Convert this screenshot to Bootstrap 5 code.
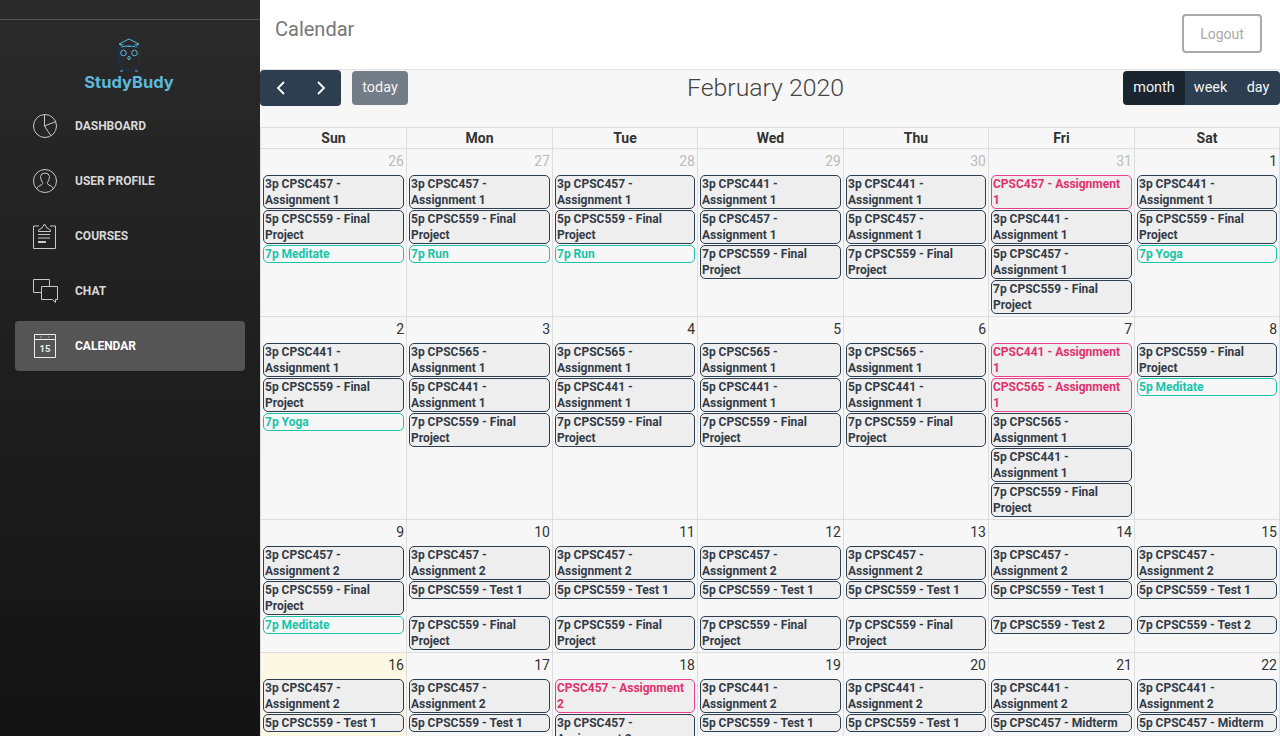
<!DOCTYPE html>
<html lang="en">
<head>
<meta charset="utf-8">
<title>Calendar</title>
<link href="https://cdn.jsdelivr.net/npm/bootstrap@5.3.0/dist/css/bootstrap.min.css" rel="stylesheet">
<style>
html,body{height:736px;overflow:hidden}
body{font-family:Roboto,"Liberation Sans",sans-serif;background:#f7f7f7;color:#333}
.side{width:260px;height:736px;background:linear-gradient(180deg,#2a2a2a 0%,#131313 100%);color:#ddd}
.side-top{height:20px;border-bottom:1px solid #555}
.brand{height:63px;margin-top:18px;padding-right:2px;color:#5db7de;font-family:Inter,"Liberation Sans",sans-serif;font-weight:700;font-size:16.5px;line-height:20px}
.brand svg{height:34px;width:24px}
.nav-i{height:50px;margin:0 15px 5px;padding-left:17px;gap:17px;border-radius:4px;color:#d8d8d8;font-size:12px;font-weight:700;text-transform:uppercase;text-decoration:none}
.nav-i svg{width:26px;height:26px;flex:none}
.nav-i.on{background:#555;color:#fff}
.main-pane{width:1020px}
.topbar{height:70px;background:#fff;border-bottom:1px solid #e2e2e2;padding:14px 18px 0 15px}
.page-ttl{font-size:20px;line-height:30px;color:#777;font-weight:400}
.btn-out{width:80px;height:39px;border:2px solid #aaa;border-radius:4px;color:#aaa;font-size:14px;background:#fff;padding:1px 0 0}
.tools{height:57px;align-items:flex-start}
.bt{background:#2c3e50;color:#f4f4f4;border:0;font-size:14.4px;height:34px;padding:0;line-height:34px}
.navpair{height:36px;width:81px;background:#2c3e50;border-radius:4px;align-items:center;justify-content:center;gap:28px}
.navpair svg{width:12px;height:16px}
.bt-today{margin-left:11px;margin-top:1px;width:56px;border-radius:4px;background:#737d87}
.cal-ttl{font-size:24.8px;line-height:36px;color:#444;font-weight:300;left:427px;width:157px;white-space:nowrap;top:0}
.bt-group{margin-top:1px;width:157px;border-radius:4px;overflow:hidden}
.bt-group .cur{background:#1a252f;width:62px}
.bt-group .wk{width:51px}
.bt-group .dy{width:44px}
.grid{table-layout:fixed;width:1020px;border-collapse:separate;border-spacing:0;font-size:12px}
.grid th{height:21px;width:146px;border-top:1px solid #ddd;border-left:1px solid #ddd;text-align:center;font-size:14px;font-weight:700;color:#333;line-height:20px;padding:0}
.grid th:nth-child(3),.grid th:nth-child(5){width:145px}
.grid td{border-left:1px solid #ddd;padding:0;vertical-align:top}
.grid th:last-child,.grid td:last-child{border-right:1px solid #ddd}
.grid tr.num td{border-top:1px solid #ddd;height:27px;text-align:right;font-size:14px;line-height:24px;padding:0 2px 0 0;color:#333}
.grid tr.num td.off{color:#bbb}
.grid tr.last td{padding-bottom:1px}
.grid td.now{background:#fcf8e3}
.evt{display:block;margin:0 2px 1px;border:1px solid #2c3e50;border-radius:5px;background:#eee;color:#333c47;font-weight:700;font-size:12px;line-height:16px;padding:0 3px 0 1px;text-decoration:none}
.evt-due{border-color:#e83e8c;color:#e0316f}
.evt-hab{border-color:#18c5a9;color:#18c5a9;background:#f7f7f7}
</style>
</head>
<body class="d-flex">
<aside class="side flex-shrink-0">
  <div class="side-top"></div>
  <div class="brand d-flex flex-column align-items-center">
    <svg viewBox="0 0 24 34" fill="none" stroke-width="1">
      <path d="M2 6 12 1l10 5-10 2.500zM4 7v2q8-3 16 0V7" stroke="#5db7de"/>
      <path d="M1.500 9q10-4 21 0v17q-2 4-6 6h-9q-4-2-6-6z" stroke="#17375e"/>
      <circle cx="6.500" cy="15" r="2.800" stroke="#5db7de"/><circle cx="17.500" cy="15" r="2.800" stroke="#5db7de"/>
      <path d="m12 18 1.500 2-1.500 2-1.500-2z" stroke="#5db7de"/>
      <path d="M3 33h3M18 33h3" stroke="#5db7de"/>
    </svg>
    <span>StudyBudy</span>
  </div>
  <nav class="d-flex flex-column">
    <a class="nav-i d-flex align-items-center" href="#"><svg viewBox="0 0 26 26" fill="none" stroke="#c8c8c8"><circle cx="13" cy="13" r="11.500"/><path d="M12.500 1.500V13L24 8.500M12.500 13 19 23"/></svg>Dashboard</a>
    <a class="nav-i d-flex align-items-center" href="#"><svg viewBox="0 0 26 26" fill="none" stroke="#c8c8c8"><circle cx="13" cy="13" r="11.500"/><path d="M4.500 21q1-3 5.500-4.500 1-1 .5-2-2-3-2-6Q9 5 13 5t4.500 3.500q0 3-2 6-.5 1 .5 2 4.500 1.500 5.500 4.500"/></svg>User Profile</a>
    <a class="nav-i d-flex align-items-center" href="#"><svg viewBox="0 0 26 26" fill="none" stroke="#c8c8c8"><path d="M7 3H1.500v22.500h22V3H18"/><path d="M6.500 8.500V7L10 5l2.500-4L15 5l3.500 2v1.500zM6 11.500h12M6 15h12"/><path d="M6 19h8" stroke-width="2"/></svg>Courses</a>
    <a class="nav-i d-flex align-items-center" href="#"><svg viewBox="0 0 26 26" fill="none" stroke="#c8c8c8"><path d="M9 14.500H1.500v-13h16V8"/><path d="M9.500 8.500h16v13h-2v3l-3-3h-11z"/></svg>Chat</a>
    <a class="nav-i on d-flex align-items-center" href="#"><svg viewBox="0 0 26 26" fill="none" stroke="#eee"><path d="M2.500 1.500h21v23h-21zM2.500 6.500h21M8.500 4h1M16.500 4h1"/><text x="13" y="18.500" font-size="9.500" fill="#eee" stroke="none" text-anchor="middle" font-family="Roboto">15</text></svg>Calendar</a>
  </nav>
</aside>
<main class="main-pane">
  <header class="topbar d-flex justify-content-between align-items-start">
    <h1 class="page-ttl m-0">Calendar</h1>
    <button class="btn-out" type="button">Logout</button>
  </header>
  <div class="tools d-flex justify-content-between position-relative">
    <div class="d-flex">
      <div class="navpair d-flex"><svg viewBox="0 0 12 16" fill="none" stroke="#fff" stroke-width="1.800"><path d="M9 2 3 8l6 6"/></svg><svg viewBox="0 0 12 16" fill="none" stroke="#fff" stroke-width="1.800"><path d="m3 2 6 6-6 6"/></svg></div>
      <button class="bt bt-today" type="button">today</button>
    </div>
    <h2 class="cal-ttl position-absolute m-0">February 2020</h2>
    <div class="bt-group d-flex"><button class="bt cur" type="button">month</button><button class="bt wk" type="button">week</button><button class="bt dy" type="button">day</button></div>
  </div>
  <table class="grid">
    <thead><tr><th>Sun</th><th>Mon</th><th>Tue</th><th>Wed</th><th>Thu</th><th>Fri</th><th>Sat</th></tr></thead>
    <tbody>
      <tr class="num"><td class="off">26</td><td class="off">27</td><td class="off">28</td><td class="off">29</td><td class="off">30</td><td class="off">31</td><td>1</td></tr>
      <tr>
        <td><a class="evt">3p CPSC457 - Assignment 1</a></td><td><a class="evt">3p CPSC457 - Assignment 1</a></td><td><a class="evt">3p CPSC457 - Assignment 1</a></td><td><a class="evt">3p CPSC441 - Assignment 1</a></td><td><a class="evt">3p CPSC441 - Assignment 1</a></td><td><a class="evt evt-due">CPSC457 - Assignment 1</a></td><td><a class="evt">3p CPSC441 - Assignment 1</a></td>
      </tr>
      <tr>
        <td><a class="evt">5p CPSC559 - Final Project</a></td><td><a class="evt">5p CPSC559 - Final Project</a></td><td><a class="evt">5p CPSC559 - Final Project</a></td><td><a class="evt">5p CPSC457 - Assignment 1</a></td><td><a class="evt">5p CPSC457 - Assignment 1</a></td><td><a class="evt">3p CPSC441 - Assignment 1</a></td><td><a class="evt">5p CPSC559 - Final Project</a></td>
      </tr>
      <tr>
        <td><a class="evt evt-hab">7p Meditate</a></td><td><a class="evt evt-hab">7p Run</a></td><td><a class="evt evt-hab">7p Run</a></td><td><a class="evt">7p CPSC559 - Final Project</a></td><td><a class="evt">7p CPSC559 - Final Project</a></td><td><a class="evt">5p CPSC457 - Assignment 1</a></td><td><a class="evt evt-hab">7p Yoga</a></td>
      </tr>
      <tr class="last"><td></td><td></td><td></td><td></td><td></td><td><a class="evt">7p CPSC559 - Final Project</a></td><td></td></tr>

      <tr class="num"><td>2</td><td>3</td><td>4</td><td>5</td><td>6</td><td>7</td><td>8</td></tr>
      <tr>
        <td><a class="evt">3p CPSC441 - Assignment 1</a></td><td><a class="evt">3p CPSC565 - Assignment 1</a></td><td><a class="evt">3p CPSC565 - Assignment 1</a></td><td><a class="evt">3p CPSC565 - Assignment 1</a></td><td><a class="evt">3p CPSC565 - Assignment 1</a></td><td><a class="evt evt-due">CPSC441 - Assignment 1</a></td><td><a class="evt">3p CPSC559 - Final Project</a></td>
      </tr>
      <tr>
        <td><a class="evt">5p CPSC559 - Final Project</a></td><td><a class="evt">5p CPSC441 - Assignment 1</a></td><td><a class="evt">5p CPSC441 - Assignment 1</a></td><td><a class="evt">5p CPSC441 - Assignment 1</a></td><td><a class="evt">5p CPSC441 - Assignment 1</a></td><td><a class="evt evt-due">CPSC565 - Assignment 1</a></td><td><a class="evt evt-hab">5p Meditate</a></td>
      </tr>
      <tr>
        <td><a class="evt evt-hab">7p Yoga</a></td><td><a class="evt">7p CPSC559 - Final Project</a></td><td><a class="evt">7p CPSC559 - Final Project</a></td><td><a class="evt">7p CPSC559 - Final Project</a></td><td><a class="evt">7p CPSC559 - Final Project</a></td><td><a class="evt">3p CPSC565 - Assignment 1</a></td><td></td>
      </tr>
      <tr><td></td><td></td><td></td><td></td><td></td><td><a class="evt">5p CPSC441 - Assignment 1</a></td><td></td></tr>
      <tr class="last"><td></td><td></td><td></td><td></td><td></td><td><a class="evt">7p CPSC559 - Final Project</a></td><td></td></tr>

      <tr class="num"><td>9</td><td>10</td><td>11</td><td>12</td><td>13</td><td>14</td><td>15</td></tr>
      <tr>
        <td><a class="evt">3p CPSC457 - Assignment 2</a></td><td><a class="evt">3p CPSC457 - Assignment 2</a></td><td><a class="evt">3p CPSC457 - Assignment 2</a></td><td><a class="evt">3p CPSC457 - Assignment 2</a></td><td><a class="evt">3p CPSC457 - Assignment 2</a></td><td><a class="evt">3p CPSC457 - Assignment 2</a></td><td><a class="evt">3p CPSC457 - Assignment 2</a></td>
      </tr>
      <tr>
        <td><a class="evt">5p CPSC559 - Final Project</a></td><td><a class="evt">5p CPSC559 - Test 1</a></td><td><a class="evt">5p CPSC559 - Test 1</a></td><td><a class="evt">5p CPSC559 - Test 1</a></td><td><a class="evt">5p CPSC559 - Test 1</a></td><td><a class="evt">5p CPSC559 - Test 1</a></td><td><a class="evt">5p CPSC559 - Test 1</a></td>
      </tr>
      <tr class="last">
        <td><a class="evt evt-hab">7p Meditate</a></td><td><a class="evt">7p CPSC559 - Final Project</a></td><td><a class="evt">7p CPSC559 - Final Project</a></td><td><a class="evt">7p CPSC559 - Final Project</a></td><td><a class="evt">7p CPSC559 - Final Project</a></td><td><a class="evt">7p CPSC559 - Test 2</a></td><td><a class="evt">7p CPSC559 - Test 2</a></td>
      </tr>

      <tr class="num"><td class="now">16</td><td>17</td><td>18</td><td>19</td><td>20</td><td>21</td><td>22</td></tr>
      <tr>
        <td class="now"><a class="evt">3p CPSC457 - Assignment 2</a></td><td><a class="evt">3p CPSC457 - Assignment 2</a></td><td><a class="evt evt-due">CPSC457 - Assignment 2</a></td><td><a class="evt">3p CPSC441 - Assignment 2</a></td><td><a class="evt">3p CPSC441 - Assignment 2</a></td><td><a class="evt">3p CPSC441 - Assignment 2</a></td><td><a class="evt">3p CPSC441 - Assignment 2</a></td>
      </tr>
      <tr>
        <td class="now"><a class="evt">5p CPSC559 - Test 1</a></td><td><a class="evt">5p CPSC559 - Test 1</a></td><td><a class="evt">3p CPSC457 - Assignment 2</a></td><td><a class="evt">5p CPSC559 - Test 1</a></td><td><a class="evt">5p CPSC559 - Test 1</a></td><td><a class="evt">5p CPSC457 - Midterm</a></td><td><a class="evt">5p CPSC457 - Midterm</a></td>
      </tr>
    </tbody>
  </table>
</main>
</body>
</html>
